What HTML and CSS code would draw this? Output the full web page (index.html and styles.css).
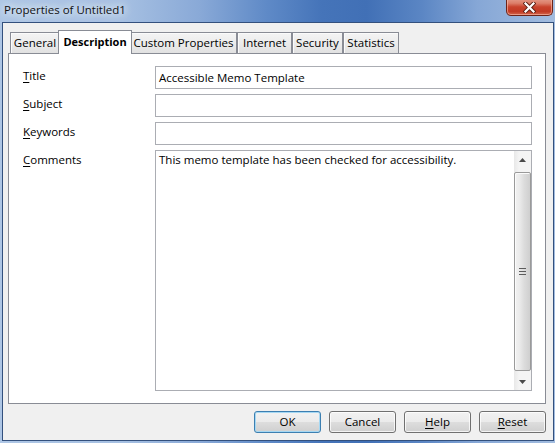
FILE: index.html
```html
<!DOCTYPE html>
<html>
<head>
<meta charset="utf-8">
<title>Properties of Untitled1</title>
<link rel="stylesheet" href="styles.css">
</head>
<body>
<div class="window">
  <div class="titlebar">
    <span class="title">Properties of Untitled1</span>
    <div class="close">
      <svg width="13" height="11" viewBox="0 0 13 11">
        <path d="M2.5 1.5 L10.5 9.5 M10.5 1.5 L2.5 9.5" stroke="#5a1f14" stroke-width="4" stroke-linecap="square" fill="none"/>
        <path d="M2.5 1.5 L10.5 9.5 M10.5 1.5 L2.5 9.5" stroke="#ffffff" stroke-width="2.2" stroke-linecap="square" fill="none"/>
      </svg>
    </div>
  </div>
  <div class="frame">
    <div class="client">
      <div class="tabs">
        <div class="tab w-general">General</div>
        <div class="tab active w-desc">Description</div>
        <div class="tab w-custom">Custom Properties</div>
        <div class="tab w-internet">Internet</div>
        <div class="tab w-security">Security</div>
        <div class="tab w-stats">Statistics</div>
      </div>
      <div class="panel">
        <div class="form">
          <div class="lbl"><u>T</u>itle</div>
          <div class="field">Accessible Memo Template</div>
          <div class="lbl"><u>S</u>ubject</div>
          <div class="field"></div>
          <div class="lbl"><u>K</u>eywords</div>
          <div class="field"></div>
          <div class="lbl"><u>C</u>omments</div>
          <div class="area">
            <div class="area-text">This memo template has been checked for accessibility.</div>
            <div class="scrollbar">
              <div class="sb-btn">
                <svg width="7" height="4" viewBox="0 0 7 4"><path d="M3.5 0 L7 4 L0 4 Z" fill="#4a4a4a"/></svg>
              </div>
              <div class="sb-track">
                <div class="thumb">
                  <svg width="7" height="7" viewBox="0 0 7 7">
                    <path d="M0 0.5 H7 M0 3.5 H7 M0 6.5 H7" stroke="#5c5c5c" stroke-width="1"/>
                  </svg>
                </div>
              </div>
              <div class="sb-btn">
                <svg width="7" height="4" viewBox="0 0 7 4"><path d="M0 0 L7 0 L3.5 4 Z" fill="#4a4a4a"/></svg>
              </div>
            </div>
          </div>
        </div>
      </div>
      <div class="buttons">
        <div class="btn default">OK</div>
        <div class="btn">Cancel</div>
        <div class="btn"><u>H</u>elp</div>
        <div class="btn"><u>R</u>eset</div>
      </div>
    </div>
  </div>
</div>
</body>
</html>
```

FILE: styles.css
```css
* { box-sizing: border-box; }

html, body {
  margin: 0;
  padding: 0;
  width: 555px;
  height: 443px;
  overflow: hidden;
}

body {
  font-family: "Open Sans", "Noto Sans", sans-serif;
  font-size: 11.5px;
  color: #000;
}

.window {
  width: 555px;
  height: 443px;
  display: flex;
  flex-direction: column;
  background: linear-gradient(90deg, #aec6e5 0%, #a6c0e2 22%, #89a9d7 36%, #5f8ac7 48%, #4574b9 58%, #4170b6 66%, #5b86c4 76%, #86a7d6 86%, #a2bcdf 100%);
}

.titlebar {
  height: 22px;
  flex: none;
  display: flex;
  justify-content: space-between;
  align-items: flex-start;
}

.title {
  margin-left: 4px;
  margin-top: 2px;
  font-size: 11.5px;
  line-height: 16px;
  color: #111;
  text-shadow: 0 0 6px #e6eef9, 0 0 10px #e6eef9, 0 0 14px #dfe9f7;
}

.close {
  width: 47px;
  height: 19px;
  margin-top: -3px;
  margin-right: 2px;
  border: 1px solid #6d2418;
  border-top: none;
  border-radius: 0 0 5px 5px;
  background: linear-gradient(#e7a797 0%, #dc7d68 35%, #c9432d 55%, #c23a24 80%, #d2664c 100%);
  box-shadow: inset 0 0 0 1px rgba(255, 200, 185, 0.55);
  display: flex;
  align-items: center;
  justify-content: center;
  padding-top: 3px;
}

.frame {
  flex: 1;
  padding: 0 1px 2px 2px;
  display: flex;
}

.client {
  flex: 1;
  border: 1px solid #33507d;
  background: #f0f0f0;
  padding: 7px 7px 7px 5px;
  display: flex;
  flex-direction: column;
}

.tabs {
  height: 23px;
  flex: none;
  display: flex;
  align-items: flex-end;
  padding-left: 2px;
}

.tab {
  height: 21px;
  border: 1px solid #898c95;
  border-bottom: none;
  background: linear-gradient(#f4f4f4 0%, #ececec 50%, #e1e1e1 100%);
  box-shadow: inset 1px 1px 0 #fbfbfb;
  text-align: center;
  line-height: 19px;
  white-space: nowrap;
}

.tab.active {
  height: 24px;
  margin: 0 -2px -1px -2px;
  background: #fff;
  box-shadow: none;
  font-weight: bold;
  font-size: 11px;
  line-height: 21px;
  position: relative;
  z-index: 1;
}

.w-general { width: 50px; }
.w-desc { width: 74px; }
.w-custom { width: 107px; }
.w-internet { width: 55px; }
.w-security { width: 51px; }
.w-stats { width: 56px; }

.panel {
  height: 351px;
  flex: none;
  border: 1px solid #898c95;
  background: #fff;
  padding: 12px 13px 12px 14px;
}

.form {
  display: grid;
  grid-template-columns: 132px 1fr;
  grid-template-rows: 23px 23px 23px 241px;
  row-gap: 5px;
}

.lbl {
  line-height: 16px;
  margin-top: 2px;
}

.lbl u, .btn u {
  text-decoration-thickness: 1px;
  text-underline-offset: 2px;
}

.field {
  border: 1px solid #abadb3;
  padding: 0 3px;
  line-height: 21px;
  white-space: nowrap;
}

.area {
  border: 1px solid #abadb3;
  display: flex;
}

.area-text {
  flex: 1;
  padding: 1px 3px;
  line-height: 16px;
}

.scrollbar {
  width: 17px;
  flex: none;
  display: flex;
  flex-direction: column;
  background: linear-gradient(90deg, #e8e8e8 0%, #f4f4f4 30%, #f4f4f4 100%);
}

.sb-btn {
  height: 17px;
  flex: none;
  display: flex;
  align-items: center;
  justify-content: center;
}

.sb-track {
  flex: 1;
  padding: 4px 0 2px 0;
  display: flex;
}

.thumb {
  flex: 1;
  border: 1px solid #9a9a9a;
  border-radius: 2px;
  background: linear-gradient(90deg, #f2f2f2 0%, #ebebeb 30%, #dcdcdc 60%, #cfcfcf 100%);
  box-shadow: inset 1px 1px 0 #fbfbfb;
  display: flex;
  align-items: center;
  justify-content: center;
}

.buttons {
  margin-top: 7px;
  display: flex;
  justify-content: flex-end;
  gap: 8px;
}

.btn {
  width: 67px;
  height: 22px;
  border: 1px solid #707070;
  border-radius: 3px;
  background: linear-gradient(#f2f2f2 0%, #ebebeb 48%, #dddddd 52%, #cfcfcf 100%);
  box-shadow: inset 0 0 0 1px rgba(255, 255, 255, 0.75);
  text-align: center;
  line-height: 19px;
}

.btn.default {
  border-color: #3c7fb1;
  box-shadow: inset 0 0 0 1px #a6d8f3;
}
```
